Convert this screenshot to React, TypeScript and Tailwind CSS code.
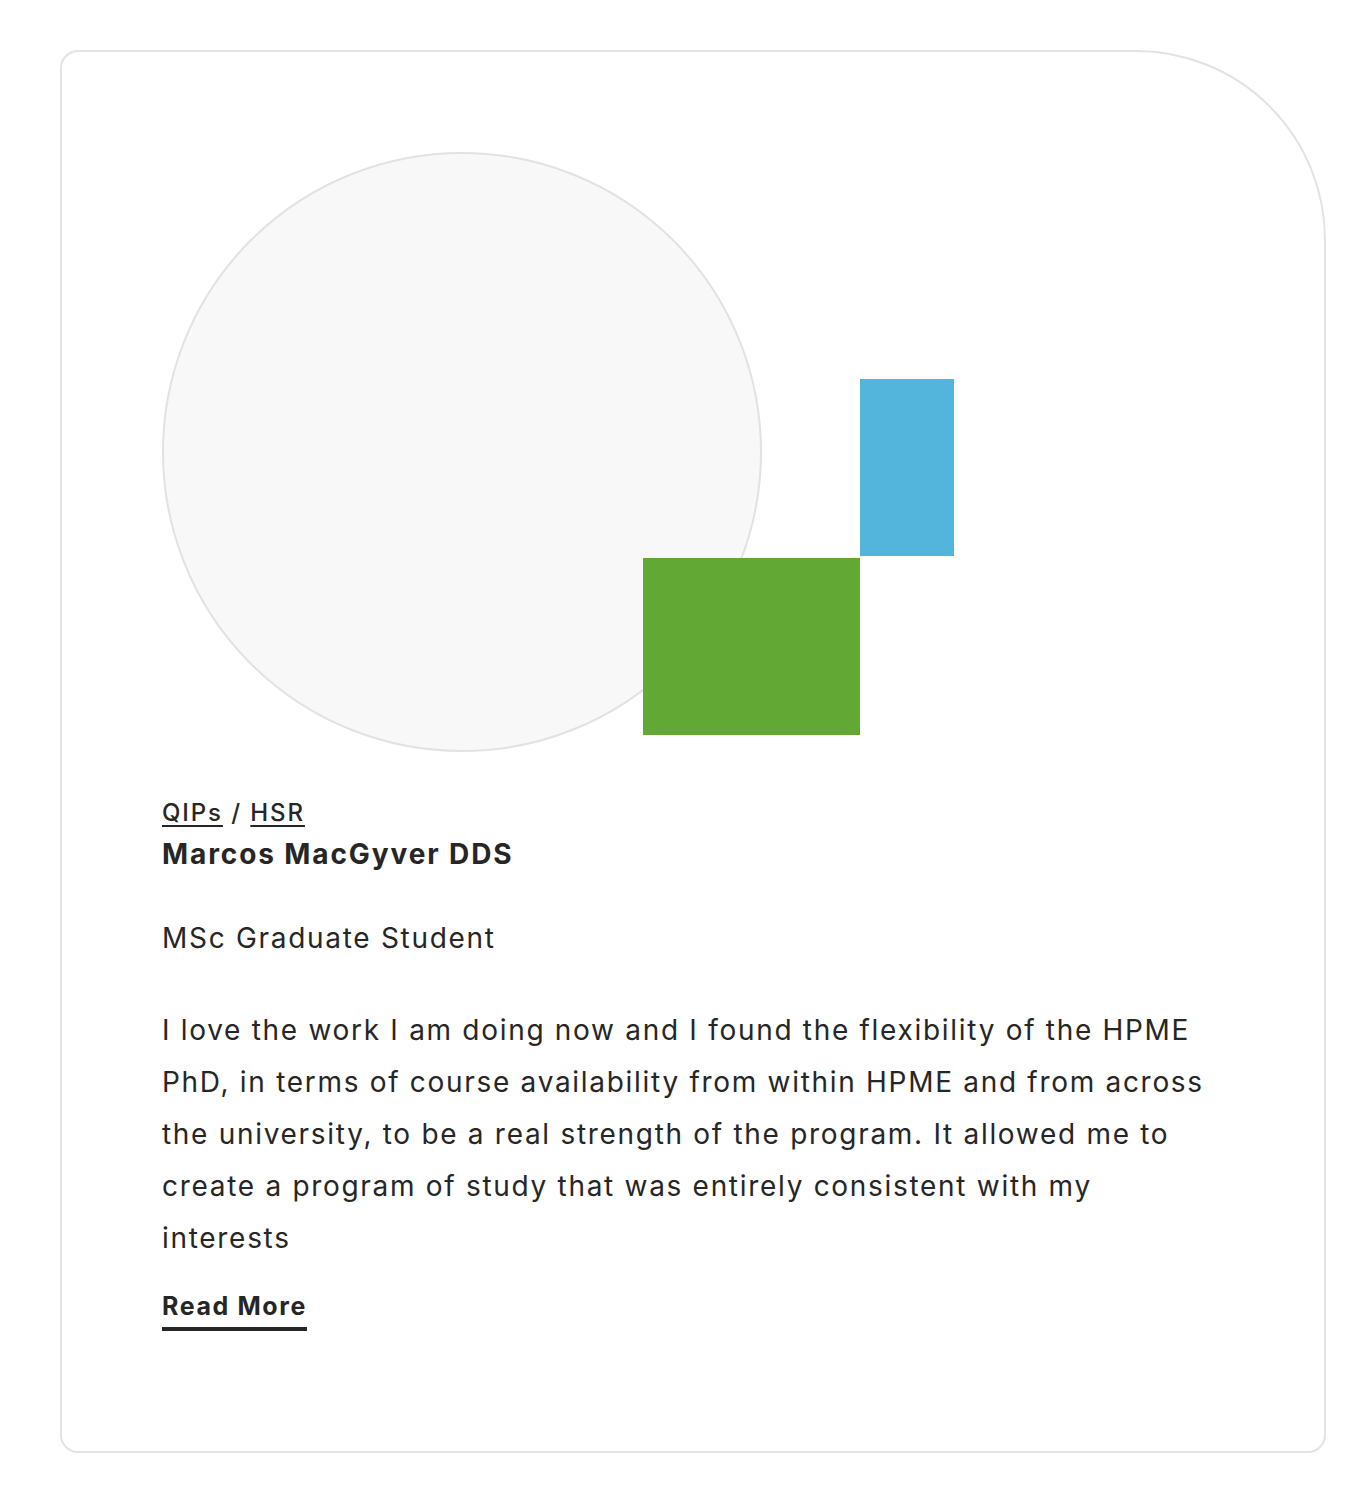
export default function App() {
  return (
    <div className="bg-white min-h-[1497px] pt-[50px] pl-[60px]" style={{ fontFamily: 'Inter, "Noto Sans", sans-serif' }}>
      <div className="w-[1266px] h-[1403px] border-2 border-[#e3e3e3] rounded-tl-[18px] rounded-tr-[190px] rounded-b-[18px] px-[100px] pt-[100px] text-[#262626]">
        <div className="relative w-[600px] h-[600px]">
          <div className="w-[600px] h-[600px] rounded-full bg-[#f8f8f8] border-2 border-[#e2e2e2]" />
          <div className="absolute left-[481px] top-[406px] w-[217px] h-[177px] bg-[#62a835]" />
          <div className="absolute left-[698px] top-[227px] w-[94px] h-[177px] bg-[#54b5dc]" />
        </div>

        <div className="mt-[44px] text-[24px] leading-[34px] font-medium tracking-[1.9px]">
          <a href="#" className="underline underline-offset-[4px] decoration-2">QIPs</a>
          <span> / </span>
          <a href="#" className="underline underline-offset-[4px] decoration-2">HSR</a>
        </div>
        <h3 className="mt-[4px] text-[28px] leading-[40px] font-bold tracking-[1.9px]">Marcos MacGyver DDS</h3>

        <p className="mt-[38px] text-[28px] leading-[52px] tracking-[1.7px]">MSc Graduate Student</p>

        <p className="mt-[40px] w-[1045px] text-[28px] leading-[52px] tracking-[1.7px]">
          I love the work I am doing now and I found the flexibility of the HPME PhD, in terms of course availability from within HPME and from across the university, to be a real strength of the program. It allowed me to create a program of study that was entirely consistent with my interests
        </p>

        <a href="#" className="inline-block mt-[25px] pb-[3px] text-[25px] leading-[35px] font-bold tracking-[1.6px] border-b-4 border-[#262626]">
          Read More
        </a>
      </div>
    </div>
  );
}
